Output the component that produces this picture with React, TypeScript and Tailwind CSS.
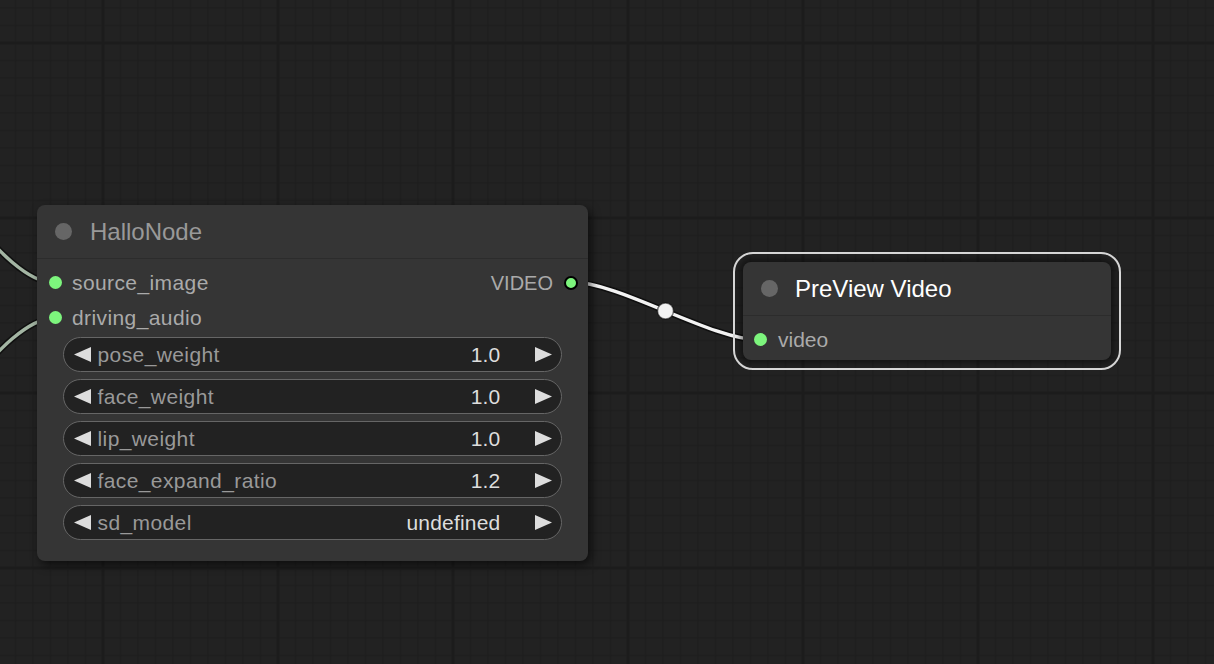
import React from "react";

function Tri({ dir }: { dir: "left" | "right" }) {
  return (
    <svg width="17" height="15" viewBox="0 0 17 15" className="shrink-0">
      {dir === "left" ? (
        <polygon points="0,7.5 17,0 17,15" fill="#dddddd" />
      ) : (
        <polygon points="17,7.5 0,0 0,15" fill="#dddddd" />
      )}
    </svg>
  );
}

function Widget({ label, value }: { label: string; value: string }) {
  return (
    <div className="h-[35px] rounded-full border-[1.5px] border-[#666666] bg-[#222222] flex items-center pl-[9.5px] pr-[9.5px]">
      <Tri dir="left" />
      <span className="ml-[7px] text-[21px] leading-none tracking-[0.4px] text-[#999999]">{label}</span>
      <span className="ml-auto text-[21px] leading-none tracking-[0.2px] text-[#dddddd]">{value}</span>
      <div className="ml-[34px]">
        <Tri dir="right" />
      </div>
    </div>
  );
}

function InSlot({ label }: { label: string }) {
  return (
    <div className="flex items-center h-[35px]">
      <div className="ml-[11.5px] w-[13px] h-[13px] rounded-full bg-[#7df57d]" />
      <span className="ml-[10.5px] text-[21px] leading-none tracking-[0.4px] text-[#aaaaaa]">{label}</span>
    </div>
  );
}

export default function App() {
  const widgets = [
    ["pose_weight", "1.0"],
    ["face_weight", "1.0"],
    ["lip_weight", "1.0"],
    ["face_expand_ratio", "1.2"],
    ["sd_model", "undefined"],
  ];
  return (
    <div className="relative w-[1214px] h-[664px] overflow-hidden bg-[#222222] font-['Liberation_Sans',Arial,sans-serif]">
      {/* canvas grid + links */}
      <svg className="absolute inset-0" width="1214" height="664" viewBox="0 0 1214 664">
        <defs>
          <pattern id="minor" width="17.5" height="17.5" patternUnits="userSpaceOnUse" x="14.75" y="7.25">
            <rect x="0" y="0" width="1.5" height="17.5" fill="#1e1e1e" />
            <rect x="0" y="0" width="17.5" height="1.5" fill="#1e1e1e" />
          </pattern>
          <pattern id="major" width="175" height="175" patternUnits="userSpaceOnUse" x="101.5" y="41.5">
            <rect x="0" y="0" width="3" height="175" fill="#1c1c1c" />
            <rect x="0" y="0" width="175" height="3" fill="#1c1c1c" />
          </pattern>
        </defs>
        <rect width="1214" height="664" fill="url(#minor)" />
        <rect width="1214" height="664" fill="url(#major)" />

        <g fill="none" strokeLinecap="round">
          <path d="M -120 150 C -65 150, 0 283, 55 283" stroke="rgba(0,0,0,0.55)" strokeWidth="6.5" />
          <path d="M -120 150 C -65 150, 0 283, 55 283" stroke="#a3b5a3" strokeWidth="3.5" />
          <path d="M -120 451 C -65 451, 0 318, 55 318" stroke="rgba(0,0,0,0.55)" strokeWidth="6.5" />
          <path d="M -120 451 C -65 451, 0 318, 55 318" stroke="#a3b5a3" strokeWidth="3.5" />
          <path d="M 571 282 C 620.4 282, 710.6 340, 760 340" stroke="rgba(0,0,0,0.55)" strokeWidth="6.5" />
          <path d="M 571 282 C 620.4 282, 710.6 340, 760 340" stroke="#f2f2f2" strokeWidth="3.5" />
        </g>
        <circle cx="665.5" cy="311" r="8" fill="#f2f2f2" stroke="rgba(0,0,0,0.5)" strokeWidth="1.5" />
      </svg>

      {/* HalloNode */}
      <div className="absolute left-[37px] top-[205px] w-[551px] h-[356px] rounded-[8px] bg-[#353535] shadow-[3px_4px_10px_rgba(0,0,0,0.6)]">
        <div className="h-[54px] flex items-center border-b border-[#2c2c2c]">
          <div className="ml-[18px] w-[17px] h-[17px] rounded-full bg-[#666666]" />
          <span className="ml-[18px] text-[24px] leading-none text-[#999999]">HalloNode</span>
        </div>
        <div className="pt-[6px]">
          <div className="flex items-center justify-between">
            <InSlot label="source_image" />
            <div className="flex items-center h-[35px] pr-[10px]">
              <span className="text-[20px] leading-none text-[#aaaaaa]">VIDEO</span>
              <div className="ml-[11px] w-[14px] h-[14px] rounded-full bg-[#7df57d] border-2 border-black" />
            </div>
          </div>
          <InSlot label="driving_audio" />
          <div className="mt-[2px] px-[26px] flex flex-col gap-[7px]">
            {widgets.map(([l, v]) => (
              <Widget key={l} label={l} value={v} />
            ))}
          </div>
        </div>
      </div>

      {/* PreView Video (selected) */}
      <div className="absolute left-[733px] top-[252px] w-[388px] h-[118px] rounded-[20px] border-2 border-[#d9d9d9] p-[8px]">
        <div className="w-full h-full rounded-[8px] bg-[#353535] shadow-[0_0_6px_3px_rgba(0,0,0,0.45)]">
          <div className="h-[54px] flex items-center border-b border-[#2c2c2c]">
            <div className="ml-[17.5px] w-[17px] h-[17px] rounded-full bg-[#666666]" />
            <span className="ml-[17.5px] text-[24px] leading-none text-white">PreView Video</span>
          </div>
          <div className="pt-[6px]">
            <div className="flex items-center h-[35px]">
              <div className="ml-[10.5px] w-[13px] h-[13px] rounded-full bg-[#7df57d]" />
              <span className="ml-[11.5px] text-[21px] leading-none text-[#aaaaaa]">video</span>
            </div>
          </div>
        </div>
      </div>
    </div>
  );
}
